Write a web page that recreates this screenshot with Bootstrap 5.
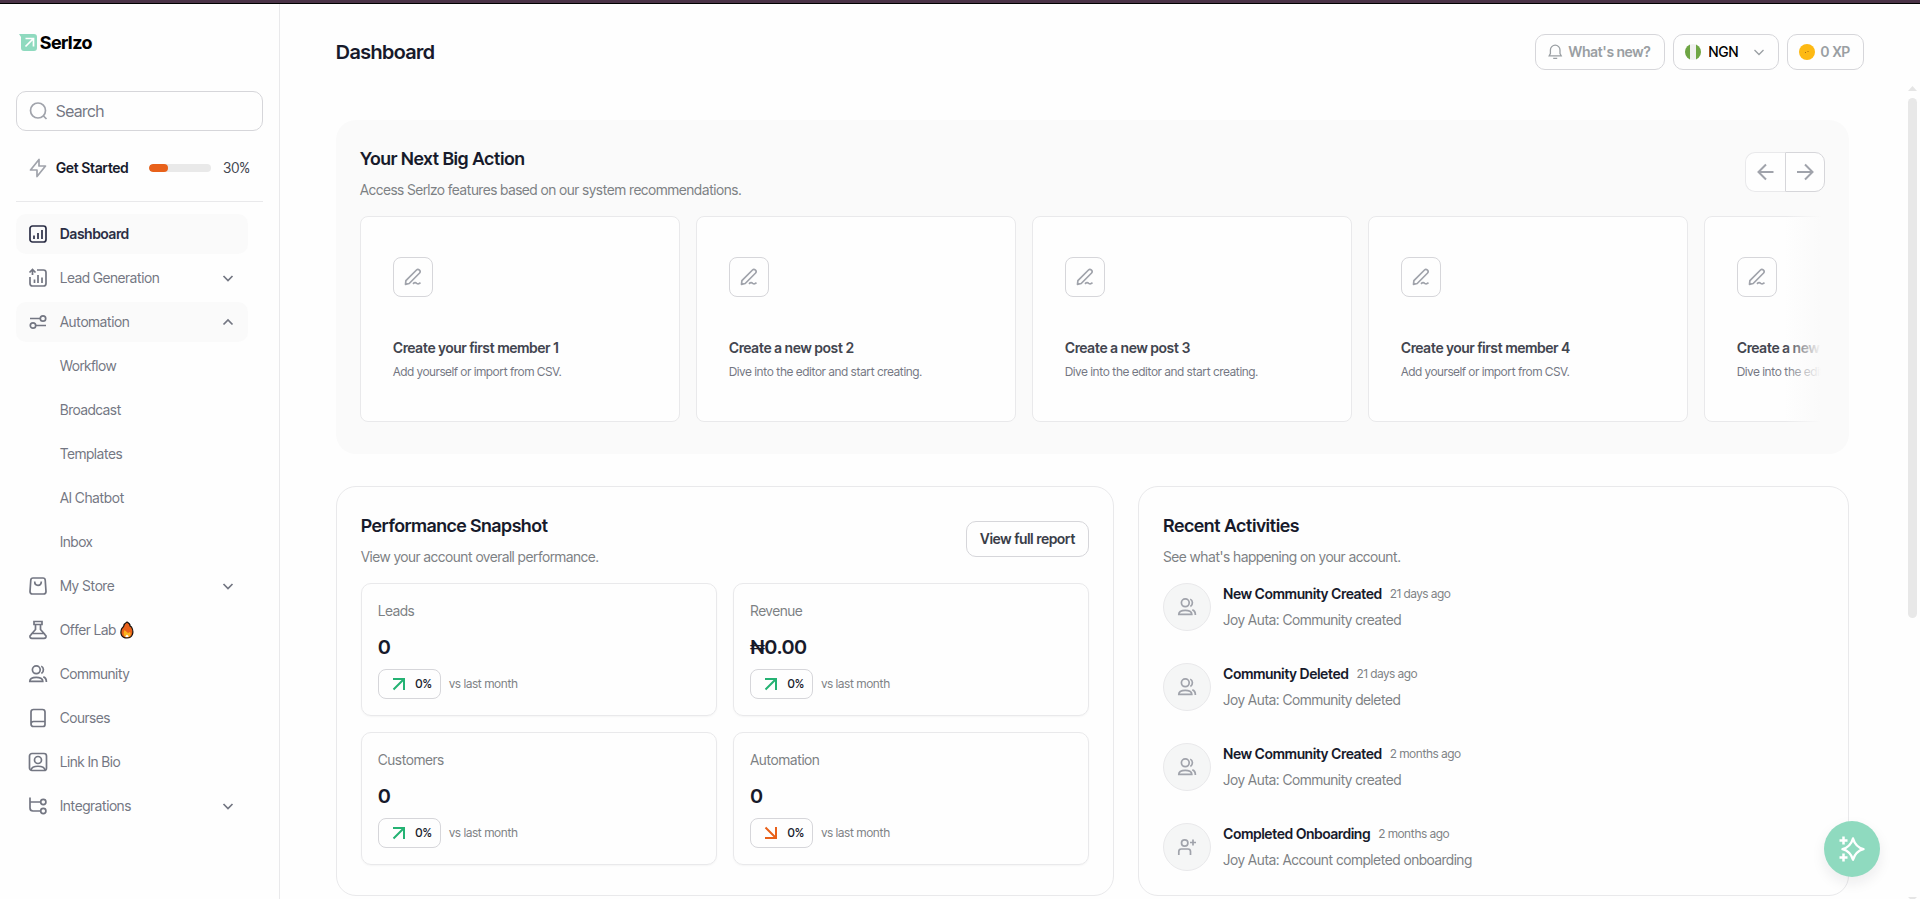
<!DOCTYPE html>
<html lang="en">
<head>
<meta charset="utf-8">
<meta name="viewport" content="width=device-width, initial-scale=1">
<title>Serlzo - Dashboard</title>
<link href="https://cdn.jsdelivr.net/npm/bootstrap@5.3.0/dist/css/bootstrap.min.css" rel="stylesheet">
<style>
  :root { --ink:#171a2b; --slate:#737682; --muted:#7c8083; --faint:#a0a3ab; --line:#e9e9eb; --edge:#d6d6da; --wash:#fafafa; --mint:#8fdabf; --orange:#e8611a; --green:#24b273; }
  body { font-family:"Inter Tight", Inter, "Liberation Sans", sans-serif; font-size:14px; line-height:20px; color:var(--ink); background:#fefefe; border-top:3px solid #4a3347; height:100vh; overflow:hidden; }
  .shell { border-top:1px solid #000; height:100%; }
  svg { flex:none; fill:none; stroke:currentColor; stroke-width:1.7; display:block; }
  svg.solid { stroke:none; }
  svg.thin { stroke-width:1.3; }
  svg.bold { stroke-width:2; }
  a { text-decoration:none; color:inherit; }
  h1,h2,h3,p { margin:0; }
  .up-tone { color:var(--green); }
  .down-tone { color:var(--orange); }

  .sidebar { width:280px; border-right:1px solid var(--line); padding:0 16px; flex:none; }
  .logo { height:72px; padding:25px 0 0 3px; font-size:18px; font-weight:700; line-height:28px; color:#000; gap:2px; }
  .search-box { height:40px; margin-top:15px; border:1px solid var(--edge); border-radius:10px; padding:0 12px; gap:7px; color:var(--faint); }
  .search-box input { border:0; outline:0; background:none; padding:0; font-size:16px; min-width:0; color:var(--ink); }
  .search-box input::placeholder { color:var(--slate); opacity:1; }
  .started { height:71px; padding:3px 13px 0 12px; border-bottom:1px solid var(--line); }
  .started svg { color:var(--faint); }
  .started span { color:#42454f; }
  .started .progress { width:62px; height:8px; border-radius:4px; background:#e9e9e9; }
  .started .progress-bar { background:var(--orange); border-radius:4px; }
  .menu { margin:12px 15px 0 0; gap:4px; }
  .menu a { height:40px; border-radius:10px; padding:0 12px; gap:12px; color:var(--slate); }
  .menu .on { background:var(--wash); }
  .menu .now { color:#2b2e45; font-weight:600; }
  .menu .sub { padding-left:44px; }

  .topbar { padding:30px 56px 14px; }
  .topbar h1 { font-size:20px; line-height:36px; font-weight:600; }
  .pill { height:36px; border:1px solid var(--edge); border-radius:10px; background:#fefefe; color:#9a9fa3; padding:0 12px; font-size:14px; font-weight:600; }
  .pill.report { color:#3a3d48; padding:0 13px; }
  .pill.news { gap:5px; padding-right:13px; }
  .pill.money { padding:0 11px; }
  .pill select { appearance:none; border:0; outline:0; background:none; padding:0; color:#000; font-weight:500; width:34px; }
  .flag { width:16px; height:16px; border-radius:50%; background:linear-gradient(90deg,#6ea544 31%,#f0f0f0 31% 69%,#6ea544 69%); }
  .pill.points { gap:6px; padding:0 13px 0 11px; }
  .body-pad { padding:36px 56px 0; }
  .rail { width:15px; padding-top:2px; }
  .thumb { width:9px; height:64%; border-radius:5px; background:#e8e8e8; margin-top:7px; }

  .actions { background:var(--wash); border-radius:20px; padding:24px 24px 32px; }
  .heading h2 { font-size:18px; line-height:30px; font-weight:600; }
  .heading p { color:var(--muted); margin-top:6px; line-height:20px; }
  .heading { margin-bottom:16px; }
  .arrows button { width:40px; height:40px; border:1px solid var(--edge); background:#fefefe; color:var(--faint); padding:0; }
  .arrows button:first-child { border-color:var(--line); border-right:0; border-radius:10px 0 0 10px; }
  .arrows button:last-child { border-radius:0 10px 10px 0; }
  .track { gap:16px; overflow:hidden; }
  .track::after { content:""; position:absolute; inset:0 0 0 auto; width:40px; background:linear-gradient(90deg,rgba(250,250,250,0),#fafafa 90%); }
  .task { flex:0 0 320px; border:1px solid var(--line); border-radius:8px; background:#fefefe; padding:40px 32px 39px; }
  .tool { width:40px; height:40px; border:1px solid var(--edge); border-radius:8px; color:var(--faint); }
  .task h3 { font-size:14px; line-height:22px; font-weight:600; margin-top:40px; color:#42454f; white-space:nowrap; }
  .task p { font-size:12px; color:var(--slate); margin-top:3px; white-space:nowrap; }

  .lower { display:grid; grid-template-columns:23fr 21fr; gap:24px; margin-top:32px; }
  .panel { border:1px solid var(--line); border-radius:20px; padding:24px; }
  .stats { display:grid; grid-template-columns:1fr 1fr; gap:16px; }
  .stat { border:1px solid var(--line); border-radius:10px; padding:16px; box-shadow:0 1px 2px rgba(20,20,30,.04); }
  .stat h3 { font-size:14px; line-height:22px; font-weight:400; color:var(--muted); }
  .stat .fig { font-size:20px; line-height:32px; font-weight:600; margin:9px 0 6px; }
  .delta { width:63px; height:30px; border:1px solid var(--edge); border-radius:8px; font-size:12px; font-weight:500; padding-right:8px; gap:6px; }
  .tiny { font-size:12px; color:var(--muted); }
  .feed { display:grid; gap:32px; }
  .disc { width:48px; height:48px; border:1px solid var(--line); border-radius:50%; background:#f5f6f6; color:var(--faint); flex:none; }
  .feed h3 { font-size:14px; line-height:22px; font-weight:600; }
  .feed p { line-height:22px; margin-top:4px; color:var(--muted); }
  .helper { position:fixed; right:40px; bottom:22px; width:56px; height:56px; border:0; border-radius:50%; background:var(--mint); color:#fff; box-shadow:0 6px 14px rgba(20,30,40,.08); padding:0; }
</style>
</head>
<body>
<svg class="d-none">
  <symbol id="down" viewBox="0 0 16 16"><path d="M3.500 6L8 10.500 12.500 6"/></symbol>
  <symbol id="up" viewBox="0 0 16 16"><path d="M3.500 10.500L8 6l4.500 4.500"/></symbol>
  <symbol id="people" viewBox="0 0 20 20"><circle cx="8.300" cy="5.800" r="3.900"/><path d="M1.800 17.300c0-2.600 3-4 6.500-4s6.500 1.400 6.500 4zM13.200 2.200c2.600.8 3.200 5.400.2 7.300M15.300 12.900c2 .7 3.100 2.300 3.100 5"/></symbol>
  <symbol id="pen" viewBox="0 0 20 20"><path d="M2.500 17.300l.4-3.700L13.500 3c1.800-1.800 5 .9 3.100 3L6.200 16.500zM10 16.800c1.500-1.600 2.800-1.300 3.700-.5 1 .8 2.300.8 3.800-.6" stroke-linejoin="round"/></symbol>
  <symbol id="rise" viewBox="0 0 20 20"><path d="M4 5h11v11M15 5L4.500 15.500"/></symbol>
  <symbol id="fall" viewBox="0 0 20 20"><path d="M15 4v11H4M4.500 4.500L15 15"/></symbol>
</svg>
<div class="shell d-flex">
  <aside class="sidebar">
    <a href="#" class="logo d-flex">
      <svg width="19" height="28" viewBox="0 0 19 28"><path d="M0 5h15q3 0 3 3v11q0 3-3 3H5q-3 0-3-3V8z" fill="#8fdabf" stroke="none"/><path d="M6.500 9.500h8v8M14 10l-7.500 7.500" stroke="#fff"/></svg>
      <span>Serlzo</span>
    </a>
    <label class="search-box d-flex align-items-center">
      <svg width="20" height="20" viewBox="0 0 20 20"><circle cx="9" cy="9.500" r="7.500"/><path d="M14.500 15l3 3"/></svg>
      <input type="search" placeholder="Search" aria-label="Search">
    </label>
    <div class="started d-flex align-items-center">
      <svg width="20" height="20" viewBox="0 0 20 20"><path d="M11 1.500v6.500h6.500L9 18.500V12H2.500z" stroke-linejoin="round"/></svg>
      <a href="#" class="ms-2 fw-semibold">Get Started</a>
      <div class="progress ms-auto" role="progressbar" aria-label="Setup progress" aria-valuenow="30" aria-valuemin="0" aria-valuemax="100"><div class="progress-bar" style="width:30%"></div></div>
      <span class="ps-2 ms-1">30%</span>
    </div>
    <nav class="menu d-flex flex-column">
      <a href="#" class="on now d-flex align-items-center"><svg width="20" height="20" viewBox="0 0 20 20"><rect x="2" y="2" width="16" height="16" rx="2.500"/><path d="M6 11.500V15M10 9v6M14 6v9"/></svg>Dashboard</a>
      <a href="#" class="d-flex align-items-center"><svg width="20" height="20" viewBox="0 0 20 20"><path d="M9 2h6.500Q18 2 18 4.500v11q0 2.500-2.500 2.500h-11Q2 18 2 15.500V9M4.500 7V2M1.500 4.500l3-3 3 3M6.500 11.500V15M10 7v8M14 9.500V15"/></svg>Lead Generation<svg class="ms-auto" width="16" height="16"><use href="#down"/></svg></a>
      <a href="#" class="on d-flex align-items-center"><svg width="20" height="20" viewBox="0 0 20 20"><path d="M2 6.500h10M8 13.500h10"/><circle cx="15" cy="6.500" r="2.700"/><circle cx="5" cy="13.500" r="2.700"/></svg>Automation<svg class="ms-auto" width="16" height="16"><use href="#up"/></svg></a>
      <a href="#" class="sub d-flex align-items-center">Workflow</a>
      <a href="#" class="sub d-flex align-items-center">Broadcast</a>
      <a href="#" class="sub d-flex align-items-center">Templates</a>
      <a href="#" class="sub d-flex align-items-center">AI Chatbot</a>
      <a href="#" class="sub d-flex align-items-center">Inbox</a>
      <a href="#" class="d-flex align-items-center"><svg width="20" height="20" viewBox="0 0 20 20"><path d="M5 2h10q2 0 2.200 2l.8 11.500q0 2.500-2.500 2.500h-11Q2 18 2 15.500L2.800 4Q3 2 5 2zM6.700 5.500q0 3.800 3.300 3.800t3.300-3.800"/></svg>My Store<svg class="ms-auto" width="16" height="16"><use href="#down"/></svg></a>
      <a href="#" class="d-flex align-items-center"><svg width="20" height="20" viewBox="0 0 20 20"><path d="M6 1.500h8v3H6zM7.500 5v4.500L3 14.500M12.500 5v4.500l4.500 5M4 13.500h12l2 2.500q.5 2-2 2.300H4q-2.500-.3-2-2.300z"/></svg><span class="d-flex align-items-center gap-1">Offer Lab
        <svg class="solid" width="14" height="18" viewBox="0 0 14 18"><path d="M7 1c2 1 3.200 2.500 3.200 4.200L11.500 6c2.800 5 1.200 11-4.500 11S-.3 12 1.800 7.500L3.600 5.500Q4 2.500 7 1z" fill="#e8611a" stroke="#16100c" stroke-width="1.200"/><path d="M4.500 9l3.500 3 2-1c1.800 3-.3 5.200-3 5.200S2.500 13 4.500 9z" fill="#fbb21c"/><path d="M7 13.500l1.800 2q-1.800 1.200-3.600 0z" fill="#fff"/></svg></span></a>
      <a href="#" class="d-flex align-items-center"><svg width="20" height="20"><use href="#people"/></svg>Community</a>
      <a href="#" class="d-flex align-items-center"><svg width="20" height="20" viewBox="0 0 20 20"><path d="M5.500 1.500h9Q17 1.500 17 4v12.500q0 2-2 2H5.500Q3 18.500 3 16V4q0-2.500 2.500-2.500zM3 16q0-2.500 2.500-2.500H17"/></svg>Courses</a>
      <a href="#" class="d-flex align-items-center"><svg width="20" height="20" viewBox="0 0 20 20"><rect x="1.500" y="1.500" width="17" height="17" rx="2.500"/><circle cx="10" cy="8" r="3.500"/><path d="M3 18c1-5 13-5 14 0"/></svg>Link In Bio</a>
      <a href="#" class="d-flex align-items-center"><svg width="20" height="20" viewBox="0 0 20 20"><path d="M2 1.500V12q0 3 3 3h7M2 6h10"/><circle cx="15.300" cy="6" r="2.600"/><circle cx="15.300" cy="15" r="2.600"/></svg>Integrations<svg class="ms-auto" width="16" height="16"><use href="#down"/></svg></a>
    </nav>
  </aside>

  <div class="flex-grow-1 d-flex flex-column overflow-hidden">
    <header class="topbar d-flex justify-content-between">
      <h1>Dashboard</h1>
      <div class="d-flex gap-2">
        <button type="button" class="pill news d-flex align-items-center"><svg class="thin" width="16" height="16" viewBox="0 0 16 16"><path d="M1.200 11.800h12L12 9.500V6a4.800 4.800 0 0 0-9.600 0v3.500zM5.200 14.400h4"/></svg>What's new?</button>
        <label class="pill money d-flex align-items-center gap-2"><span class="flag"></span><select aria-label="Currency"><option>NGN</option></select><svg class="thin" width="16" height="16"><use href="#down"/></svg></label>
        <button type="button" class="pill points d-flex align-items-center"><svg width="16" height="16" viewBox="0 0 16 16"><circle cx="8" cy="8" r="8" fill="#fdb913" stroke="none"/><path d="M6 8.500h1M8.500 7.500h1" stroke="#a86a12" stroke-width="1"/></svg>0 XP</button>
      </div>
    </header>
    <div class="d-flex flex-grow-1 overflow-hidden">
      <main class="body-pad flex-grow-1 overflow-hidden">
        <section class="actions">
          <div class="heading d-flex justify-content-between align-items-center">
            <div><h2>Your Next Big Action</h2><p>Access Serlzo features based on our system recommendations.</p></div>
            <div class="arrows d-flex">
              <button type="button" aria-label="Previous" class="d-flex align-items-center justify-content-center"><svg class="bold" width="20" height="20" viewBox="0 0 20 20"><path d="M17.500 10h-15M10 2.500L2.500 10l7.500 7.500"/></svg></button>
              <button type="button" aria-label="Next" class="d-flex align-items-center justify-content-center"><svg class="bold" width="20" height="20" viewBox="0 0 20 20"><path d="M2 10h15M10 2.500l7.500 7.500-7.500 7.500"/></svg></button>
            </div>
          </div>
          <div class="track d-flex position-relative">
            <article class="task"><div class="tool d-flex align-items-center justify-content-center"><svg width="20" height="20"><use href="#pen"/></svg></div><h3>Create your first member 1</h3><p>Add yourself or import from CSV.</p></article>
            <article class="task"><div class="tool d-flex align-items-center justify-content-center"><svg width="20" height="20"><use href="#pen"/></svg></div><h3>Create a new post 2</h3><p>Dive into the editor and start creating.</p></article>
            <article class="task"><div class="tool d-flex align-items-center justify-content-center"><svg width="20" height="20"><use href="#pen"/></svg></div><h3>Create a new post 3</h3><p>Dive into the editor and start creating.</p></article>
            <article class="task"><div class="tool d-flex align-items-center justify-content-center"><svg width="20" height="20"><use href="#pen"/></svg></div><h3>Create your first member 4</h3><p>Add yourself or import from CSV.</p></article>
            <article class="task"><div class="tool d-flex align-items-center justify-content-center"><svg width="20" height="20"><use href="#pen"/></svg></div><h3>Create a new post 5</h3><p>Dive into the editor and start creating.</p></article>
          </div>
        </section>

        <div class="lower">
          <section class="panel">
            <div class="heading d-flex justify-content-between align-items-center">
              <div><h2>Performance Snapshot</h2><p>View your account overall performance.</p></div>
              <button type="button" class="pill report">View full report</button>
            </div>
            <div class="stats">
              <div class="stat"><h3>Leads</h3><div class="fig">0</div><div class="d-flex align-items-center gap-2"><span class="delta d-flex align-items-center justify-content-end"><svg class="bold up-tone" width="20" height="20"><use href="#rise"/></svg>0%</span><span class="tiny">vs last month</span></div></div>
              <div class="stat"><h3>Revenue</h3><div class="fig">₦0.00</div><div class="d-flex align-items-center gap-2"><span class="delta d-flex align-items-center justify-content-end"><svg class="bold up-tone" width="20" height="20"><use href="#rise"/></svg>0%</span><span class="tiny">vs last month</span></div></div>
              <div class="stat"><h3>Customers</h3><div class="fig">0</div><div class="d-flex align-items-center gap-2"><span class="delta d-flex align-items-center justify-content-end"><svg class="bold up-tone" width="20" height="20"><use href="#rise"/></svg>0%</span><span class="tiny">vs last month</span></div></div>
              <div class="stat"><h3>Automation</h3><div class="fig">0</div><div class="d-flex align-items-center gap-2"><span class="delta d-flex align-items-center justify-content-end"><svg class="bold down-tone" width="20" height="20"><use href="#fall"/></svg>0%</span><span class="tiny">vs last month</span></div></div>
            </div>
          </section>
          <section class="panel">
            <div class="heading"><h2>Recent Activities</h2><p>See what's happening on your account.</p></div>
            <div class="feed">
              <article class="d-flex"><span class="disc d-flex align-items-center justify-content-center me-2"><svg width="20" height="20"><use href="#people"/></svg></span><div class="ms-1"><div class="d-flex align-items-center gap-2"><h3>New Community Created</h3><time class="tiny">21 days ago</time></div><p>Joy Auta: Community created</p></div></article>
              <article class="d-flex"><span class="disc d-flex align-items-center justify-content-center me-2"><svg width="20" height="20"><use href="#people"/></svg></span><div class="ms-1"><div class="d-flex align-items-center gap-2"><h3>Community Deleted</h3><time class="tiny">21 days ago</time></div><p>Joy Auta: Community deleted</p></div></article>
              <article class="d-flex"><span class="disc d-flex align-items-center justify-content-center me-2"><svg width="20" height="20"><use href="#people"/></svg></span><div class="ms-1"><div class="d-flex align-items-center gap-2"><h3>New Community Created</h3><time class="tiny">2 months ago</time></div><p>Joy Auta: Community created</p></div></article>
              <article class="d-flex"><span class="disc d-flex align-items-center justify-content-center me-2"><svg width="20" height="20" viewBox="0 0 20 20"><circle cx="7.700" cy="6" r="3.200"/><path d="M1.800 18v-3.500Q1.800 12 4.300 12H11q2.500 0 2.500 2.500V18M16 2.500v6M13 5.500h6"/></svg></span><div class="ms-1"><div class="d-flex align-items-center gap-2"><h3>Completed Onboarding</h3><time class="tiny">2 months ago</time></div><p>Joy Auta: Account completed onboarding</p></div></article>
            </div>
          </section>
        </div>
      </main>
      <div class="rail d-flex flex-column align-items-center flex-shrink-0" aria-hidden="true">
        <svg class="solid" width="9" height="5" viewBox="0 0 9 5"><path d="M0 5l4.500-5L9 5z" fill="#e5e5e5"/></svg>
        <div class="thumb"></div>
        <svg class="solid mt-auto" width="9" height="2" viewBox="0 0 9 2"><path d="M0 0h9L7 2H2z" fill="#e5e5e5"/></svg>
      </div>
    </div>
  </div>
</div>
<button type="button" class="helper d-flex align-items-center justify-content-center" aria-label="Open assistant">
  <svg class="bold" width="28" height="28" viewBox="0 0 28 28"><path d="M15 3.500Q17.500 12 25.500 14.200q-8 2.200-10.500 10.500Q12.500 16.400 4.500 14.200 12.500 12 15 3.500z" stroke-linejoin="round" stroke-width="2.400"/><path d="M5.500 1.500v8M1.500 5.500h8M5.500 18.500v8M1.500 22.500h8" stroke-width="2.500"/></svg>
</button>
<script src="https://cdn.jsdelivr.net/npm/bootstrap@5.3.0/dist/js/bootstrap.bundle.min.js"></script>
</body>
</html>
